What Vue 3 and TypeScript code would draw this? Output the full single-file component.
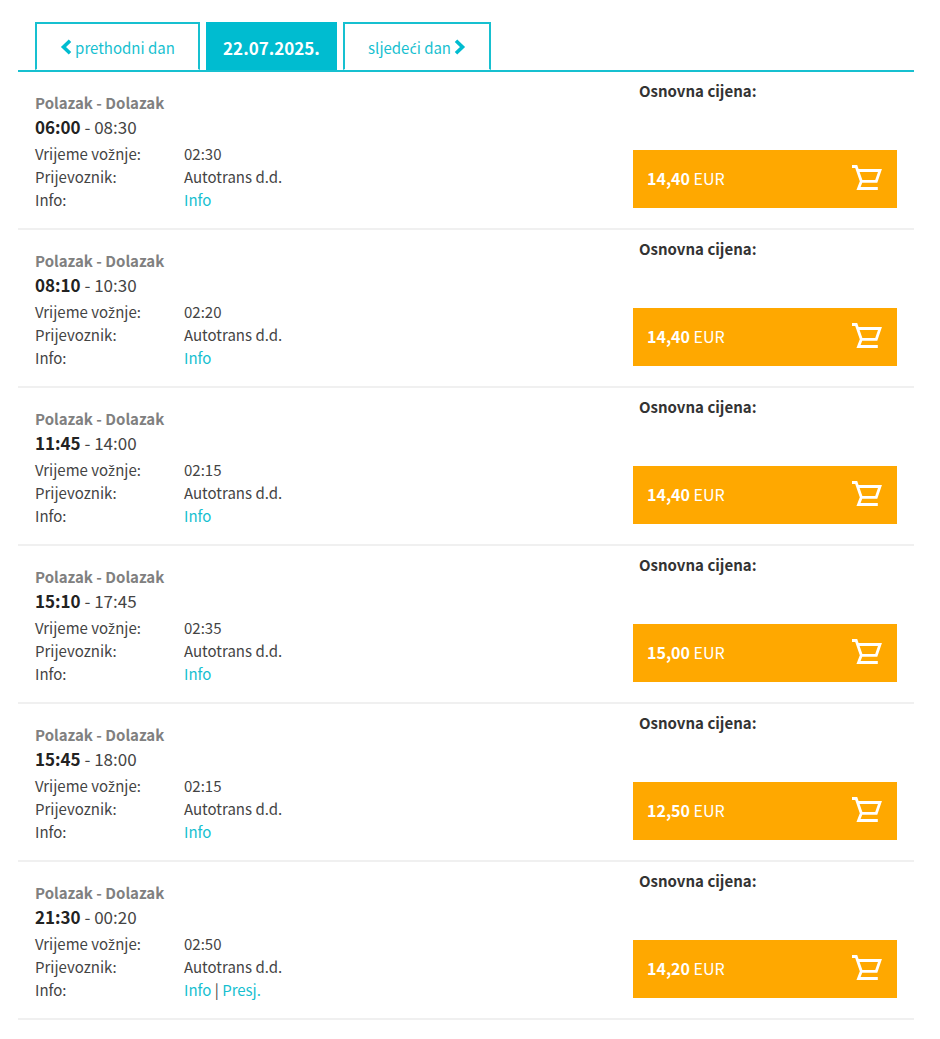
<script setup lang="ts">
interface Departure {
  departs: string
  arrives: string
  duration: string
  carrier: string
  price: string
  transfer?: boolean
}

const carrier = 'Autotrans d.d.'
const departures: Departure[] = [
  { departs: '06:00', arrives: '08:30', duration: '02:30', carrier, price: '14,40' },
  { departs: '08:10', arrives: '10:30', duration: '02:20', carrier, price: '14,40' },
  { departs: '11:45', arrives: '14:00', duration: '02:15', carrier, price: '14,40' },
  { departs: '15:10', arrives: '17:45', duration: '02:35', carrier, price: '15,00' },
  { departs: '15:45', arrives: '18:00', duration: '02:15', carrier, price: '12,50' },
  { departs: '21:30', arrives: '00:20', duration: '02:50', carrier, price: '14,20', transfer: true },
]
</script>

<template>
  <main class="timetable">
    <nav class="days">
      <a class="day prev" href="#">
        <svg class="chevron" viewBox="0 0 12 16" aria-hidden="true"><path d="M10 1.8 3.5 8l6.5 6.2" /></svg>
        <span>prethodni dan</span>
      </a>
      <a class="day current" href="#" aria-current="date">22.07.2025.</a>
      <a class="day next" href="#">
        <span>sljede<span class="accented">ć</span>i dan</span>
        <svg class="chevron" viewBox="0 0 12 16" aria-hidden="true"><path d="M2 1.8 8.5 8 2 14.2" /></svg>
      </a>
    </nav>

    <ul class="departures">
      <li v-for="d in departures" :key="d.departs" class="departure">
        <div class="trip">
          <div class="label">Polazak - Dolazak</div>
          <div class="times"><strong>{{ d.departs }}</strong> - {{ d.arrives }}</div>
          <dl class="details">
            <dt>Vrijeme vo<span class="accented">ž</span>nje:</dt>
            <dd>{{ d.duration }}</dd>
            <dt>Prijevoznik:</dt>
            <dd>{{ d.carrier }}</dd>
            <dt>Info:</dt>
            <dd>
              <a href="#">Info</a><template v-if="d.transfer"> | <a href="#">Presj.</a></template>
            </dd>
          </dl>
        </div>
        <div class="fare">
          <div class="fare-title">Osnovna cijena:</div>
          <button class="buy" type="button">
            <span><strong>{{ d.price }}</strong> EUR</span>
            <svg class="cart" viewBox="0 0 32 28" aria-hidden="true">
              <path d="M1 2.5h4.2l5.1 14.8h15L29 6.5H7.2M10.3 17.3 7.5 24.5h19.3" />
            </svg>
          </button>
        </div>
      </li>
    </ul>
  </main>
</template>

<style>
body {
  margin: 0;
  background: #fff;
}
</style>

<style scoped>
.timetable {
  padding: 22px 26px 18px 18px;
  font-family: "Noto Sans CJK SC", "Noto Sans", sans-serif;
  font-size: 15px;
  line-height: 23px;
  color: #444;
}

/* The main family has no precomposed ć and ž. */
.accented {
  font-family: "Noto Sans", sans-serif;
  line-height: 1;
}

a {
  color: #17bfd0;
  text-decoration: none;
}

.days {
  display: flex;
  gap: 6px;
  padding-left: 17px;
  border-bottom: 2px solid #17c0d0;
}

.day {
  display: flex;
  align-items: center;
  justify-content: center;
  gap: 3px;
  box-sizing: border-box;
  height: 48px;
  padding-top: 2px;
  border: 2px solid #17c0d0;
  border-bottom: 1px solid #fff;
}

.prev {
  width: 165px;
}

.current {
  width: 131px;
  border-color: #00bcd0;
  background: #00bcd0;
  color: #fff;
  font-size: 17px;
  font-weight: 700;
}

.next {
  width: 148px;
}

.chevron {
  width: 12px;
  height: 16px;
  margin-bottom: 2px;
  fill: none;
  stroke: #00bcd0;
  stroke-width: 3.6;
}

.departures {
  margin: 0;
  padding: 0;
  list-style: none;
}

.departure {
  display: flex;
  justify-content: space-between;
  box-sizing: border-box;
  min-height: 158px;
  padding: 0 17px;
  border-bottom: 2px solid #f0f0f0;
}

.trip {
  padding-top: 19px;
}

.label {
  font-weight: 700;
  color: #808080;
}

.times {
  font-size: 17px;
  line-height: 25px;
}

.times strong {
  color: #222;
}

.details {
  display: grid;
  grid-template-columns: 149px auto;
  margin: 3px 0 0;
}

.details dd {
  margin: 0;
}

.fare {
  width: 264px;
  padding-top: 7px;
}

.fare-title {
  padding-left: 6px;
  font-weight: 700;
  color: #333;
}

.buy {
  display: flex;
  align-items: center;
  justify-content: space-between;
  width: 100%;
  height: 58px;
  margin: 48px 0 0;
  padding: 0 14px 2px;
  border: 0;
  background: #ffa800;
  color: #fff;
  font: inherit;
  font-size: 16px;
  cursor: pointer;
}

.cart {
  width: 32px;
  height: 28px;
  fill: none;
  stroke: #fff;
  stroke-width: 2.8;
}
</style>
